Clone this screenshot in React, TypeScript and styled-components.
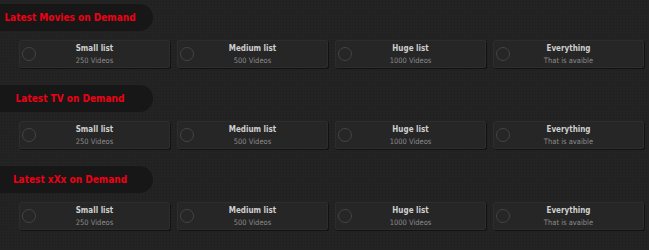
import React from "react";
import styled, { createGlobalStyle } from "styled-components";

const Global = createGlobalStyle`
  html, body { margin: 0; padding: 0; }
  body {
    width: 649px;
    height: 250px;
    overflow: hidden;
    background-color: #232323;
    background-image: radial-gradient(#1d1d1d 0.8px, transparent 1px);
    background-size: 3px 3px;
    font-family: "DejaVu Sans", Verdana, sans-serif;
  }
`;

const Page = styled.div`
  display: flex;
  flex-direction: column;
  gap: 17px;
  padding-top: 4px;
`;

const Section = styled.section`
  display: flex;
  flex-direction: column;
  gap: 9px;
`;

const Pill = styled.div`
  width: 153px;
  height: 27px;
  box-sizing: border-box;
  padding-right: 13px;
  background: #171717;
  border-radius: 0 14px 14px 0;
  display: flex;
  align-items: center;
  justify-content: center;
`;

const Title = styled.h2`
  margin: 0;
  font-family: "DejaVu Sans Condensed", "DejaVu Sans", sans-serif;
  font-weight: bold;
  font-size: 10px;
  color: #ee0015;
  white-space: nowrap;
`;

const Cards = styled.div`
  display: grid;
  grid-template-columns: repeat(4, 151px);
  gap: 7px;
  padding-left: 19px;
`;

const Card = styled.div`
  position: relative;
  height: 28px;
  box-sizing: border-box;
  background: #262626;
  border: 1px solid #2d2d2d;
  border-radius: 2px;
  box-shadow: 1px 1px 0 #121212;
  display: flex;
  flex-direction: column;
  align-items: center;
  justify-content: center;
  gap: 4px;
`;

const Radio = styled.span`
  position: absolute;
  left: 2px;
  top: 6px;
  width: 12px;
  height: 12px;
  border: 1px solid #444;
  border-radius: 50%;
`;

const CardTitle = styled.div`
  font-family: "DejaVu Sans Condensed", "DejaVu Sans", sans-serif;
  font-weight: bold;
  font-size: 8px;
  line-height: 9px;
  color: #cfcfcf;
`;

const CardSub = styled.div`
  font-family: "DejaVu Sans Condensed", "DejaVu Sans", sans-serif;
  font-size: 7.5px;
  line-height: 8px;
  color: #8a8a8a;
`;

const options = [
  { title: "Small list", sub: "250 Videos" },
  { title: "Medium list", sub: "500 Videos" },
  { title: "Huge list", sub: "1000 Videos" },
  { title: "Everything", sub: "That is avaible" },
];

const sections = [
  "Latest Movies on Demand",
  "Latest TV on Demand",
  "Latest xXx on Demand",
];

export default function App() {
  return (
    <>
      <Global />
      <Page>
        {sections.map((s) => (
          <Section key={s}>
            <Pill>
              <Title>{s}</Title>
            </Pill>
            <Cards>
              {options.map((o) => (
                <Card key={o.title}>
                  <Radio />
                  <CardTitle>{o.title}</CardTitle>
                  <CardSub>{o.sub}</CardSub>
                </Card>
              ))}
            </Cards>
          </Section>
        ))}
      </Page>
    </>
  );
}
